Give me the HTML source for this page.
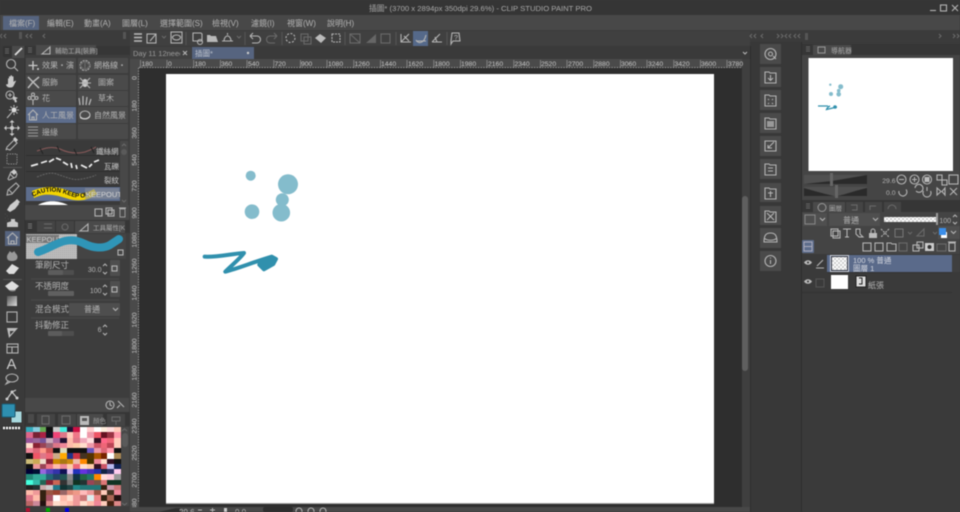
<!DOCTYPE html>
<html><head><meta charset="utf-8"><style>
html,body{margin:0;padding:0;background:#3a3a3a;width:960px;height:512px;overflow:hidden}
svg{position:absolute;left:0;top:0;filter:blur(.45px)}
text{font-family:"Liberation Sans","Noto Sans CJK TC",sans-serif;font-size:8px;fill:#b4b4b4}
.r text{font-size:6.800px;fill:#c8c8c8}
.k{fill:none;stroke:#b4b4b4;stroke-width:1.1}
.d{fill:none;stroke:#6a6a6a;stroke-width:1.1}
#pal{position:absolute;left:26px;top:427px;width:95px;height:79px;display:grid;grid-template-columns:repeat(14,1fr);grid-template-rows:repeat(15,1fr);background:#222;filter:blur(.4px)}
#pal i{display:block}
</style></head><body>
<svg width="960" height="512" viewBox="0 0 960 512" xmlns="http://www.w3.org/2000/svg">
<defs>
<pattern id="ch" width="4" height="4" patternUnits="userSpaceOnUse"><rect width="4" height="4" fill="#fff"/><rect width="2" height="2" fill="#cfcfcf"/><rect x="2" y="2" width="2" height="2" fill="#cfcfcf"/></pattern>
<pattern id="ch2" width="2" height="2" patternUnits="userSpaceOnUse"><rect width="2" height="2" fill="#bdbdbd"/><rect width="1" height="1" fill="#a8a8a8"/></pattern>
<path id="cau" d="M33 197c14-8 25-6 38-1 8 3 14 2 20-2"/>
</defs>
<!-- chrome -->
<rect width="960" height="512" fill="#3a3a3a"/>
<rect width="960" height="15" fill="#353535"/>
<text x="369" y="11" style="fill:#a8a8a8;font-size:7.700px">插圖* (3700 x 2894px 350dpi 29.6%)  - CLIP STUDIO PAINT PRO</text>
<path d="M930 10.500h6" class="k"/><rect x="940.500" y="5" width="6" height="6" class="k"/><path d="M952 5l6 6M958 5l-6 6" class="k"/>
<rect y="15" width="960" height="15" fill="#484848"/>
<rect x="3" y="16" width="36" height="14" fill="#56647f"/>
<g>
<text x="9" y="26">檔案(F)</text><text x="47" y="26">編輯(E)</text><text x="84" y="26">動畫(A)</text><text x="122" y="26">圖層(L)</text><text x="160" y="26">選擇範圍(S)</text><text x="212" y="26">檢視(V)</text><text x="251" y="26">濾鏡(I)</text><text x="287" y="26">視窗(W)</text><text x="327" y="26">說明(H)</text>
</g>
<rect y="30" width="960" height="16" fill="#3b3b3b"/>
<rect x="130" y="31" width="620" height="15" fill="#404040"/>
<path d="M2 34l-2 2 2 2M6 34l-2 2 2 2M28 34l-2 2 2 2M32 34l-2 2 2 2M45 34l-2 2 2 2M752 34l-2 2 2 2M756 34l-2 2 2 2M763 34l-2 2 2 2M777 34l2 2-2 2M781 34l2 2-2 2M787 34l-2 2 2 2M791 34l-2 2 2 2M796 34l-2 2 2 2M800 34l-2 2 2 2M939 34l2 2-2 2M953 34l2 2-2 2M957 34l2 2-2 2" class="d"/>
<rect x="19" y="32" width="3" height="7" fill="#555"/><rect x="123" y="32" width="3" height="7" fill="#555"/><rect x="805" y="33" width="3" height="7" fill="#555"/>
<!-- toolbar icons -->
<path d="M134 34h8M134 37.500h8M134 41h8" stroke="#bbb" stroke-width="1.400" fill="none"/>
<rect x="147" y="34" width="9" height="9" class="k"/><path d="M150 41l6-7" class="k"/>
<path d="M162 36l2 2 2-2" class="d"/>
<rect x="171" y="32" width="11" height="11" class="k"/><ellipse cx="176.500" cy="37.500" rx="4" ry="2.500" class="k"/>
<path d="M193 33h8l1 1v7h-9z" class="k"/><circle cx="200" cy="42" r="2.500" class="k"/>
<path d="M207 42v-7h3l1 1h5l2 6z" fill="#b8b8b8"/>
<path d="M222 41h11M224 41a3.500 5 0 017 0M227.500 35v-2" class="k"/>
<path d="M237 36l2 2 2-2" class="d"/>
<path d="M250 36h7a3.500 3.500 0 010 7h-5M250 36l3-3M250 36l3 3" class="k"/>
<path d="M277 36h-7a3.500 3.500 0 000 7h5M277 36l-3-3M277 36l-3 3" class="d"/>
<circle cx="290.500" cy="38" r="4.500" class="k" stroke-dasharray="2 1.500"/>
<path d="M301 34h7v7h-7zM304 37h7v7h-7z" class="d"/>
<path d="M315 38l5-4 6 4-5 5z" fill="#bbb"/>
<rect x="332" y="34" width="8" height="8" class="k" stroke-dasharray="2 1"/>
<rect x="350" y="34" width="10" height="9" class="d"/><path d="M350 34l10 9" class="d"/>
<path d="M366 43l10-9v9z" fill="#666"/><rect x="381" y="34" width="9" height="9" class="d"/>
<rect x="413" y="31" width="15" height="15" fill="#55698a"/>
<path d="M401 34v8h10M401 42l8-8M404 36l5 5" class="k"/>
<path d="M416 40c2 4 8 4 10-5M416 41h10" class="k"/>
<path d="M432 42h10M432 42l8-8M435 37l2 5" class="k"/>
<path d="M452 33h7l1 8h-7l-2 3v-3z" class="k"/><text x="454" y="40" style="font-size:7px">?</text>
<path d="M186 32v13M245 32v13M282 32v13M345 32v13M396 32v13M447 32v13" stroke="#555"/>
<!-- tabs -->
<rect x="130" y="46" width="620" height="13" fill="#3a3a3a"/>
<rect x="130" y="47" width="61" height="12" fill="#414141"/>
<text x="133" y="56" style="fill:#9c9c9c;font-size:7.500px">Day 11 12need</text>
<rect x="180" y="48" width="10" height="10" fill="#414141"/>
<path d="M183 51l4 4M187 51l-4 4" class="k"/>
<rect x="192" y="47" width="62" height="12" fill="#56647f"/>
<text x="195" y="56" style="fill:#bfc4cf;font-size:7.500px">插圖*</text><circle cx="248" cy="53" r="1.200" fill="#ccc"/>
<path d="M743 52l2 2 2-2" class="k"/>
<!-- canvas -->
<rect x="139" y="68" width="603" height="439" fill="#2e2e2e"/>
<rect x="166" y="74" width="548" height="429" fill="#fff"/>
<path d="M166 503.500h548" stroke="#a5a5a5"/>
<rect x="130" y="59" width="612" height="9" fill="#4a4a4a"/>
<rect x="130" y="59" width="9" height="448" fill="#4a4a4a"/>
<rect x="742" y="59" width="8" height="448" fill="#3f3f3f"/>
<rect x="742" y="196" width="6" height="175" rx="3" fill="#5f5f5f"/>
<path d="M139 67.500H742" stroke="#a8a8a8" stroke-dasharray="1 1.670"/>
<path d="M138.500 68V503" stroke="#a8a8a8" stroke-dasharray="1 1.670"/>
<g class="r">
<path d="M140.500 60v8M167 60v8M193.700 60v8M220.400 60v8M247 60v8M273.800 60v8M300.500 60v8M327 60v8M353.800 60v8M380.500 60v8M407 60v8M433.800 60v8M460.500 60v8M487 60v8M513.800 60v8M540.500 60v8M567 60v8M593.800 60v8M620.500 60v8M647 60v8M673.800 60v8M700.500 60v8M727 60v8" stroke="#999" stroke-width=".7"/>
<text x="141.500" y="66">180</text><text x="168" y="66">0</text><text x="194.500" y="66">180</text><text x="221" y="66">360</text><text x="248" y="66">540</text><text x="274.500" y="66">720</text><text x="301" y="66">900</text><text x="328" y="66">1080</text><text x="354.500" y="66">1260</text><text x="381" y="66">1440</text><text x="408" y="66">1620</text><text x="434.500" y="66">1800</text><text x="461" y="66">1980</text><text x="488" y="66">2160</text><text x="514.500" y="66">2340</text><text x="541" y="66">2520</text><text x="568" y="66">2700</text><text x="594.500" y="66">2880</text><text x="621" y="66">3060</text><text x="648" y="66">3240</text><text x="674.500" y="66">3420</text><text x="701" y="66">3600</text><text x="728" y="66">3780</text>
<g text-anchor="middle">
<text transform="translate(136.500 78) rotate(-90)">0</text><text transform="translate(136.500 106) rotate(-90)">180</text><text transform="translate(136.500 133) rotate(-90)">360</text><text transform="translate(136.500 160) rotate(-90)">540</text><text transform="translate(136.500 186) rotate(-90)">720</text><text transform="translate(136.500 213) rotate(-90)">900</text><text transform="translate(136.500 240) rotate(-90)">1080</text><text transform="translate(136.500 266) rotate(-90)">1260</text><text transform="translate(136.500 293) rotate(-90)">1440</text><text transform="translate(136.500 320) rotate(-90)">1620</text><text transform="translate(136.500 346) rotate(-90)">1800</text><text transform="translate(136.500 373) rotate(-90)">1980</text><text transform="translate(136.500 400) rotate(-90)">2160</text><text transform="translate(136.500 426) rotate(-90)">2340</text><text transform="translate(136.500 453) rotate(-90)">2520</text><text transform="translate(136.500 480) rotate(-90)">2700</text><text transform="translate(136.500 506) rotate(-90)">2880</text>
</g></g>
<!-- drawing -->
<g fill="#84bccc"><circle cx="250.700" cy="175.700" r="5"/><circle cx="288" cy="184.300" r="10"/><circle cx="282.300" cy="199.700" r="6.500"/><circle cx="252" cy="211.700" r="7.300"/><circle cx="281.300" cy="212.700" r="8.800"/></g>
<g transform="translate(190 160) scale(.3333)"><path d="M44 290C85 292 125 281 162 279C150 296 125 316 106 335C145 325 185 308 245 290L258 297L250 312L222 328L208 314" fill="none" stroke="#3090ad" stroke-width="12" stroke-linecap="round" stroke-linejoin="round"/><path d="M205 305L245 285L260 295L252 315L222 330z" fill="#3090ad"/></g>
<!-- left toolbar -->
<rect y="46" width="25" height="466" fill="#3a3a3a"/>
<rect x="12" y="46" width="13" height="12" fill="#4a4a4a"/><rect x="3" y="46" width="9" height="11" fill="#333"/>
<path d="M5 49h4M5 51h4M5 53h4" stroke="#666"/>
<path d="M15 55l7-7" stroke="#ddd" stroke-width="1.800"/>
<path d="M25 46v466" stroke="#2e2e2e"/>
<circle cx="11" cy="64" r="4.500" class="k"/><path d="M14.500 67.500l3.500 3.500" class="k"/>
<path d="M8 84v-5c0-1 1-1 1 0v2-4c0-1 1.500-1 1.500 0v4-5c0-1 1.500-1 1.500 0v5-4c0-1 1.500-1 1.500 0v5c1-1 2-1.500 2.500-1l-2.500 5c-1 1.500-2 1.500-3.500 1.500-2 0-3.500-1-4-3z" fill="#c8c8c8"/>
<circle cx="10" cy="95" r="4" class="k"/><path d="M10 93v4M8 95h4" class="k"/><path d="M13 96l5 2-2 1 1 3-2 .5-1-3-1 1z" fill="#c8c8c8"/>
<path d="M7 118l7-8" class="k"/><circle cx="14" cy="110" r="2.500" fill="#ddd"/><path d="M14 105v2M14 113v2M9 110h2M17 110h2M10.500 106.500l1.500 1.500M16 112l1.500 1.500M17.500 106.500L16 108" class="k" stroke-width=".8"/>
<path d="M12 121v14M5 128h14" class="k"/><path d="M12 120l-2.500 2.500h5zM12 136l-2.500-2.500h5zM4 128l2.500-2.500v5zM20 128l-2.500-2.500v5z" fill="#ccc"/><circle cx="12" cy="128" r="2" fill="#ccc"/>
<path d="M7 149l-1 1 1-3 7-7 3 3-7 7z" class="k"/><path d="M13 139l2-2 3 3-2 2z" fill="#ccc"/>
<rect x="7" y="154" width="10" height="10" fill="none" stroke="#888" stroke-dasharray="1.500 1"/>
<path d="M3 167.500h19" stroke="#555"/>
<path d="M8 179l3-7 3-1 3 3-1 3-7 3z M10 174l4 4" class="k"/><path d="M11 172l3-3 3 3-3 3z" fill="#ccc"/>
<path d="M7 195l1-5 8-7 3 3-7 8zM9 190l3 3" class="k"/>
<path d="M7 210l3-5 5-4 4 3-4 5-5 3z" fill="#ccc"/><path d="M15 201l2-2 3 3-2 2z" fill="#ccc"/>
<path d="M7 227h11v-4c0-1-3-1-3-2v-2h-4v2c0 1-4 1-4 2z" fill="#c8c8c8"/><path d="M5 214h.1M7 216h.1M5 218h.1M8 219h.1M6 221h.1" stroke="#bbb" stroke-width="1.200"/>
<rect x="5" y="231" width="15" height="15" fill="#56647f"/>
<path d="M7 238l5.500-5 5.500 5M8.500 237v7h8v-7M11 244v-3h3v3" class="k"/>
<path d="M7 257c0-3 2.500-4 2.500-6 1 1 2 1 2.500 2 .5-1 1.500-1 2.500-2 0 2 3 3 3 6 0 3-2.500 4-5.500 4s-5-1-5-4z" fill="#999"/>
<path d="M6 271l6-7 7 4-5 6H9z" fill="#ddd"/>
<path d="M3 279.500h19" stroke="#555"/>
<path d="M5 286l7-5 7 5-4 4H9z" fill="#ddd"/><path d="M9 290c1 2 6 2 7 0z" fill="#888"/>
<defs><linearGradient id="g1" x1="0" y1="0" x2="1" y2="1"><stop offset="0" stop-color="#555"/><stop offset="1" stop-color="#ddd"/></linearGradient></defs>
<rect x="7" y="296" width="10" height="10" fill="url(#g1)"/>
<rect x="7" y="312" width="10" height="10" class="k"/>
<path d="M7 328h11l-9 10zM10 331h4l-4 4z" fill="#bbb" fill-rule="evenodd"/>
<rect x="7" y="344" width="11" height="9" class="k"/><path d="M7 347h11M12 347v6" class="k"/>
<text x="6.500" y="369" style="fill:#ccc;font-size:15px">A</text>
<ellipse cx="12" cy="378" rx="6" ry="4" class="k"/><path d="M8 381l-2 3 4-2" class="k"/>
<path d="M7 399l5-7 5 6M12 392l4-2" stroke="#ccc" stroke-width="1.200" fill="none"/><circle cx="7" cy="399" r="1.500" fill="#ccc"/><circle cx="17" cy="398" r="1.500" fill="#ccc"/><circle cx="12" cy="392" r="1.500" fill="#ccc"/>
<rect x="11" y="411" width="11" height="12" fill="#a9d9de" stroke="#333"/>
<rect x="2" y="404" width="13" height="13" rx="1" fill="#2e8fb0" stroke="#1c5c73"/>
<rect x="2" y="425.500" width="20" height="5" fill="#333"/><path d="M3 428h18" stroke="#fff" stroke-width="2.500" stroke-dasharray="2 1"/>
<!-- left panel -->
<rect x="25" y="46" width="105" height="466" fill="#3d3d3d"/>
<rect x="25" y="46" width="105" height="9" fill="#363636"/>
<rect x="36" y="45" width="60" height="10" fill="#4a4a4a"/>
<path d="M28 48h4M28 50h4M28 52h4" stroke="#666"/>
<path d="M42 54l8-7v7z" class="k"/>
<text x="55" y="53" style="fill:#aaa;font-size:6.500px">輔助工具[裝飾]</text>
<g fill="#4a4a4a"><rect x="26" y="58" width="50" height="15"/><rect x="78" y="58" width="50" height="15"/><rect x="26" y="75" width="50" height="15"/><rect x="78" y="75" width="50" height="15"/><rect x="26" y="91" width="50" height="15"/><rect x="78" y="91" width="50" height="15"/><rect x="78" y="107" width="50" height="16"/><rect x="26" y="124" width="50" height="15"/><rect x="78" y="124" width="50" height="15"/></g>
<rect x="26" y="107" width="50" height="16" fill="#5d6d8c"/>
<g>
<text x="42" y="68">效果・演</text><text x="94" y="68">網格線・</text><text x="42" y="85">服飾</text><text x="98" y="85">圖案</text><text x="42" y="101">花</text><text x="98" y="101">草木</text><text x="42" y="118">人工風景</text><text x="94" y="118">自然風景</text><text x="42" y="135">邊緣</text>
</g>
<path d="M33 61v9M28.500 65.500h9" stroke="#ccc" stroke-width="1.300"/><circle cx="38" cy="69" r="1" fill="#ccc"/>
<circle cx="85" cy="65.500" r="5" class="k" stroke-dasharray="2 1"/><path d="M80 65.500l5-5 5 5-5 5zM85 61v9" class="d"/>
<path d="M28 77l5 5 6-5M28 88l5-6 6 6M33 82v-1" stroke="#bbb" stroke-width="1.500" fill="none"/>
<ellipse cx="85" cy="83" rx="3" ry="4" fill="#ccc"/><path d="M80 78l10 10M90 78l-10 10M79 83h12" class="k"/>
<circle cx="33" cy="98" r="2" class="k"/><circle cx="33" cy="94.500" r="1.500" class="k"/><circle cx="36.500" cy="98" r="1.500" class="k"/><circle cx="29.500" cy="98" r="1.500" class="k"/><path d="M33 100v5" class="k"/>
<path d="M80 105l-1-7M83 105v-9M86 105l1-8M89 105l2-6" stroke="#bbb" stroke-width="1.200"/>
<path d="M28 115l5-5 5 5M29.500 114v6h7v-6M32 120v-3h2v3" class="k"/>
<ellipse cx="85" cy="115" rx="5" ry="4" class="k"/><path d="M80 116c2 3 8 3 10-1v2c-2 3-8 3-10 1z" fill="#ccc"/>
<path d="M28 127h10M28 130h10M28 133h10M28 136h10" stroke="#999"/>
<!-- brush list -->
<rect x="26" y="141" width="94" height="64" fill="#3a3a3a"/>
<rect x="26" y="186" width="94" height="15" fill="#5d6d8c"/>
<path d="M26 155.500h94M26 171.500h94M26 186.500h94" stroke="#2e2e2e"/>
<path d="M37 151c8-3 15-5 23-2 8 4 16 5 25 3 6-2 9-4 11-5" fill="none" stroke="#8a5a5a"/>
<path d="M40 148l3 6M57 146l3 6M74 149l3 6M91 147l3 6" stroke="#222"/>
<text x="96" y="154" style="fill:#ccc;font-size:7.500px">鐵絲網</text>
<path d="M31 166l7-2M41 163l6-2M49 162l5-3M56 158l5 2M63 162l5 3M71 163l1 5M76 165l1 4M81 165l6 3M89 167l3-3M94 162l5-2" stroke="#eee" stroke-width="1.700" fill="none"/>
<text x="104" y="169" style="fill:#ccc;font-size:7.500px">瓦礫</text>
<path d="M37 177c8-3 14-6 22-2 8 2 14 6 23 4 5-1 10-2 14-4" fill="none" stroke="#666" stroke-dasharray="2 1"/>
<text x="104" y="183" style="fill:#ccc;font-size:7.500px">裂紋</text>
<path d="M32 191c14-6 26-5 40 1 8 3 15 1 22-3l3 5c-8 6-18 8-28 5-13-4-23-7-35-1z" fill="#f2d400"/>
<text style="fill:#111;font-size:6.300px;font-weight:bold"><textPath href="#cau">CAUTION KEEP OUT</textPath></text>
<rect x="85" y="188" width="34" height="11" fill="#8a8f98" fill-opacity=".6"/>
<text x="86" y="197" style="fill:#d5d5d5;font-size:7.500px">KEEPOUT</text>
<path d="M38 205c8-5 20-5 30 0z" fill="#fff"/>
<rect x="120" y="141" width="8" height="64" fill="#484848"/><circle cx="124" cy="152" r="3" fill="#5a5a5a"/><path d="M122 146l2-2 2 2M122 200l2 2 2-2" class="d"/>
<rect x="25" y="205" width="104" height="15" fill="#484848"/>
<rect x="95" y="209" width="7" height="7" class="k"/><rect x="106" y="208" width="6" height="6" class="k"/><rect x="108" y="210" width="6" height="6" class="k"/><rect x="120" y="209" width="5" height="8" fill="none" stroke="#999"/><path d="M119 208h7" class="k"/>
<!-- tool prop -->
<rect x="25" y="220" width="105" height="13" fill="#363636"/>
<rect x="37" y="221" width="18" height="11" fill="#444"/><rect x="56" y="221" width="18" height="11" fill="#444"/><rect x="75" y="221" width="50" height="12" fill="#4a4a4a"/>
<path d="M28 224h4M28 226h4M28 228h4" stroke="#777"/>
<path d="M44 224h8M44 228h8" class="d"/><circle cx="65" cy="227" r="3" class="d"/>
<path d="M80 231l8-7v7z" class="k"/>
<text x="93" y="230" style="fill:#aaa;font-size:6.500px">工具屬性[K</text>
<rect x="26" y="234" width="100" height="25" fill="#444"/>
<rect x="26" y="234" width="51" height="25" fill="url(#ch2)"/>
<rect x="26" y="235" width="33" height="8" fill="#777"/>
<text x="26.500" y="242" style="fill:#ccc;font-size:7.500px">KEEPOUT</text>
<path d="M38 252c10-3 18-9 27-11 8-2 14 0 20 3 8 4 18 5 25 1 3-2 6-4 9-6" fill="none" stroke="#2f95b7" stroke-width="8" stroke-linecap="round"/>
<rect x="118" y="250" width="5" height="5" class="k"/>
<text x="35" y="268" style="font-size:8.500px">筆刷尺寸</text>
<rect x="48" y="270" width="26" height="5" rx="1" fill="#4e4e4e"/><rect x="48" y="270" width="15" height="5" rx="1" fill="#5c5c5c"/>
<text x="101.500" y="272" text-anchor="end" style="font-size:7px">30.0</text><path d="M103 266l2-2 2 2M103 272l2 2 2-2" class="k" stroke-width=".8"/>
<rect x="110" y="260" width="10" height="16" rx="1" fill="#4e4e4e"/><rect x="112" y="266" width="5" height="5" class="k" stroke-width=".8"/>
<path d="M31 279h88" stroke="#4a4a4a"/>
<text x="35" y="289" style="font-size:8.500px">不透明度</text>
<rect x="48" y="291" width="26" height="5" rx="1" fill="#606060"/>
<text x="101.500" y="293" text-anchor="end" style="font-size:7px">100</text><path d="M103 287l2-2 2 2M103 293l2 2 2-2" class="k" stroke-width=".8"/>
<rect x="110" y="281" width="10" height="16" rx="1" fill="#4e4e4e"/><rect x="112" y="287" width="5" height="5" class="k" stroke-width=".8"/>
<path d="M31 300h88" stroke="#4a4a4a"/>
<text x="35" y="312" style="font-size:8.500px">混合模式</text>
<rect x="69" y="303" width="51" height="13" rx="1" fill="#4e4e4e"/>
<text x="84" y="312">普通</text><path d="M113 308l2.500 2.500 2.500-2.500" class="k"/>
<path d="M31 318h88" stroke="#4a4a4a"/>
<text x="35" y="328" style="font-size:8.500px">抖動修正</text>
<rect x="48" y="331" width="26" height="5" rx="1" fill="#4e4e4e"/><rect x="48" y="331" width="14" height="5" rx="1" fill="#5c5c5c"/>
<text x="101.500" y="332" text-anchor="end" style="font-size:7px">6</text><path d="M103 327l2-2 2 2M103 333l2 2 2-2" class="k" stroke-width=".8"/>
<rect x="25" y="398" width="104" height="14" fill="#484848"/>
<circle cx="110" cy="405" r="4" class="k"/><path d="M110 402v3l2 1" class="k"/>
<path d="M118 401l6 6M117 408l3-3" class="k" stroke-width="1.500"/>
<rect x="25" y="412" width="105" height="14" fill="#363636"/>
<rect x="28" y="414" width="6" height="9" fill="#4a4a4a"/>
<rect x="37" y="414" width="18" height="12" fill="#444"/><rect x="58" y="414" width="18" height="12" fill="#444"/><rect x="77" y="414" width="26" height="12" fill="#4a4a4a"/><rect x="107" y="414" width="18" height="12" fill="#444"/>
<rect x="42" y="416" width="7" height="8" class="d"/><rect x="62" y="416" width="8" height="8" class="d"/><rect x="80" y="416" width="9" height="9" fill="#bbb"/><rect x="82" y="418" width="5" height="3" fill="#555"/>
<text x="93" y="423" style="fill:#999;font-size:6.500px">顏色</text>
<path d="M112 417h8v4h-8zM116 421v4" class="d"/>
<rect x="121" y="427" width="8" height="80" fill="#484848"/><rect x="122" y="433" width="6" height="14" rx="3" fill="#5a5a5a"/>
<path d="M122 431l2.500-2 2.500 2M122 503l2.500 2 2.500-2" class="d"/>
<rect x="25" y="506" width="105" height="6" fill="#3d3d3d"/>
<rect x="26" y="508" width="4" height="4" fill="#b01030"/><rect x="46" y="508" width="4" height="4" fill="#0a0"/><rect x="65" y="508" width="4" height="4" fill="#00d"/>
<!-- bottom bar -->
<rect x="130" y="507" width="620" height="5" fill="#484848"/>
<path d="M159 512l17-4h4v4z" fill="#2e2e2e"/>
<text x="179" y="515">29.6</text><path d="M198 510h4M210 510h5M212.500 508v4" class="k"/><rect x="224" y="508" width="3" height="4" fill="#ccc"/>
<text x="235" y="515">0.0</text>
<rect x="263" y="507" width="30" height="5" rx="2" fill="#2e2e2e"/>
<circle cx="299" cy="511" r="3" class="k"/><circle cx="311" cy="511" r="3" class="k"/><circle cx="323" cy="511" r="3" class="k"/>
<!-- dock -->
<rect x="750" y="42" width="51" height="470" fill="#383838"/>
<path d="M750.500 46v466M801.500 42v470" stroke="#2e2e2e"/>
<g fill="#4a4a4a"><rect x="760" y="44" width="21" height="20"/><rect x="760" y="67" width="21" height="20"/><rect x="760" y="90" width="21" height="20"/><rect x="760" y="113" width="21" height="20"/><rect x="760" y="136" width="21" height="20"/><rect x="760" y="159" width="21" height="20"/><rect x="760" y="183" width="21" height="19"/><rect x="760" y="206" width="21" height="19"/><rect x="760" y="228" width="21" height="20"/><rect x="760" y="251" width="21" height="20"/></g>
<circle cx="770.500" cy="54" r="5.500" class="k"/><circle cx="770.500" cy="54" r="2" class="k"/><path d="M773 56l3 3" class="k"/>
<g class="k"><path d="M765 72h4l1 1h6v10h-11z"/><path d="M765 95h4l1 1h6v10h-11z"/><path d="M765 118h4l1 1h6v10h-11z"/><path d="M765 141h11v10h-11z"/><path d="M765 164h4l1 1h6v10h-11z"/><path d="M765 188h4l1 1h6v10h-11z"/><path d="M765 211h4l1 1h6v10h-11z"/></g>
<path d="M770.500 75v5M768 78l2.500 2.500 2.500-2.500M768 99l1 1M773 99l-1 1M768 104l1-1M773 104l-1-1" class="k"/>
<rect x="767" y="121" width="7" height="6" fill="#999"/>
<path d="M768 148l6-6M772 148h-4v-3" class="k"/>
<path d="M768 168h5M768 171h5M770.500 191v6M768 193h5M767 213l7 7M774 213l-7 7" class="k"/>
<path d="M764 242c0-8 3-9 6.500-9s6.500 1 6.500 9zM764 238c3 3 10 3 13 0" class="k"/>
<circle cx="770.500" cy="261" r="5.500" class="k"/><path d="M770.500 260v4M770.500 257.500v1" class="k"/>
<!-- right -->
<rect x="802" y="42" width="158" height="470" fill="#3a3a3a"/>
<rect x="802" y="44" width="158" height="11" fill="#363636"/>
<rect x="813" y="45" width="38" height="10" fill="#4a4a4a"/>
<path d="M806 47h4M806 49h4M806 51h4" stroke="#666"/>
<rect x="818" y="47" width="7" height="6" fill="none" stroke="#999"/>
<text x="831" y="53" style="fill:#aaa;font-size:7px">導航器</text>
<rect x="802" y="55" width="158" height="117" fill="#444"/>
<rect x="808.500" y="58" width="144.500" height="113" fill="#fff"/>
<g fill="#84bccc"><circle cx="830.300" cy="84.700" r="1.200"/><circle cx="840.700" cy="86.700" r="2.500"/><circle cx="838.700" cy="90.700" r="1.800"/><circle cx="831" cy="94" r="2"/><circle cx="838.700" cy="94.300" r="2.300"/></g>
<path d="M818 106h10M830 106c-2 1-3 2-3.500 3.500L837 107" fill="none" stroke="#3090ad" stroke-width="1.300"/><circle cx="835" cy="107" r="1.800" fill="#3090ad"/>
<rect x="802" y="171" width="158" height="29" fill="#454545"/>
<rect x="804" y="175" width="63" height="9" fill="#505050"/><path d="M804 184l28-3 35-6v9z" fill="#2a2a2a"/><rect x="830" y="173" width="3" height="13" fill="#666"/>
<rect x="804" y="187" width="63" height="9" fill="#505050"/><path d="M804 196v-8c10 3 25 7 30 8zM837 196c7-1 20-6 30-8v8z" fill="#2a2a2a"/><rect x="835" y="185" width="3" height="13" fill="#666"/>
<text x="895.500" y="183" text-anchor="end" style="font-size:6.800px">29.6</text><text x="895.500" y="195" text-anchor="end" style="font-size:6.800px">0.0</text>
<g class="k"><circle cx="901.500" cy="179.500" r="4.500"/><path d="M899 179.500h5"/><circle cx="914.500" cy="179.500" r="4.500"/><path d="M912 179.500h5M914.500 177v5"/><circle cx="927" cy="179.500" r="4.500"/><rect x="937" y="175" width="5" height="5"/><rect x="942" y="180" width="5" height="5"/><rect x="949" y="175" width="9" height="9"/><path d="M899 191a4 4 0 107-1.500M916 191a4 4 0 10-1-3M927 187v4M923.500 191a4 4 0 107 0M937 188v7l4-3.500zM945 188v7l-3-3.500zM950 188l7 7M957 188l-7 7"/></g>
<rect x="924.500" y="177" width="5" height="5" fill="#bbb"/>
<rect x="802" y="200" width="158" height="12" fill="#363636"/>
<path d="M806 204h4M806 206h4M806 208h4" stroke="#666"/>
<rect x="813" y="202" width="32" height="11" fill="#4a4a4a"/><rect x="846" y="202" width="17" height="10" fill="#444"/><rect x="865" y="202" width="17" height="10" fill="#444"/><rect x="884" y="202" width="17" height="10" fill="#444"/>
<circle cx="822" cy="207.500" r="4" fill="none" stroke="#999"/><text x="829" y="210.500" style="fill:#aaa;font-size:6.500px">圖層</text>
<path d="M851 205h6v5h-5M870 210v-4h6M888 209a4 4 0 018 0" class="d"/>
<rect x="802" y="212" width="158" height="42" fill="#444"/>
<rect x="803" y="213" width="24" height="13" fill="#4f4f4f"/><rect x="805" y="215" width="10" height="9" fill="none" stroke="#888"/><path d="M820 218l2.500 2.500 2.500-2.500" class="k"/>
<rect x="829" y="213" width="51" height="13" fill="#4f4f4f"/><text x="843" y="223">普通</text><path d="M873 218l2.500 2.500 2.500-2.500" class="k"/>
<rect x="884" y="217" width="53" height="5" fill="url(#ch)"/><rect x="936" y="213" width="2" height="12" fill="#999"/>
<text x="951" y="223" text-anchor="end" style="font-size:7px">100</text><path d="M953 217l2-2 2 2M953 222l2 2 2-2" class="k" stroke-width=".8"/>
<g class="k"><rect x="831" y="229" width="7" height="7"/><rect x="833" y="231" width="7" height="7"/></g>
<path d="M843 229h8M847 229v8M845 237h4M856 229h4v5l3 3h-4l-3-3z" stroke="#bbb" fill="none"/><rect x="869" y="233" width="8" height="5" fill="#bbb"/><path d="M871 233v-2a2 2 0 014 0v2" stroke="#bbb" fill="none"/>
<path d="M881 229l8 8M889 229l-8 8" class="k" stroke-dasharray="2 1"/>
<rect x="895" y="229" width="8" height="8" fill="none" stroke="#777"/><path d="M908 232l2 2 2-2M917 236l7-7v7zM933 232l2 2 2-2" class="d"/>
<rect x="938" y="226" width="22" height="13" fill="#4f4f4f"/><rect x="941" y="232" width="6" height="6" fill="#fff"/><rect x="939" y="228" width="7" height="7" fill="#3a8de8"/><path d="M951 231l2.500 2.500 2.500-2.500" class="k"/>
<rect x="802" y="240" width="12" height="13" rx="1" fill="#5d6d8c"/><rect x="804" y="242" width="8" height="9" stroke="#aab" fill="none"/><path d="M804 246.500h8" stroke="#aab"/>
<g class="k"><rect x="863" y="243" width="8" height="8"/><rect x="875" y="243" width="8" height="8"/><path d="M887 243h4l1 1h4v7h-9z"/><rect x="913" y="245" width="6" height="6"/><rect x="917" y="242" width="6" height="6"/><rect x="949" y="243" width="6" height="8"/><path d="M948 242h8"/></g>
<rect x="925" y="243" width="9" height="8" fill="#ccc"/>
<rect x="899" y="243" width="8" height="8" class="d"/><rect x="937" y="244" width="9" height="7" class="d"/>
<circle cx="929.500" cy="247" r="2" fill="#333"/>
<rect x="802" y="254" width="158" height="258" fill="#3a3a3a"/>
<rect x="827" y="255" width="125" height="17" fill="#5a6a8a"/>
<rect x="952" y="255" width="8" height="17" fill="#3f3f3f"/>
<rect x="830.500" y="255.500" width="18" height="16" fill="#2f3442" stroke="#cfd4de"/><rect x="832" y="257" width="15" height="13" fill="url(#ch)"/>
<text x="853" y="263" style="fill:#d5d8e0;font-size:7.500px">100 % 普通</text><text x="853" y="271" style="fill:#d5d8e0;font-size:7.500px">圖層 1</text>
<path d="M804 262.500c2-3 6-3 8 0c-2 3-6 3-8 0z" fill="#bbb"/><circle cx="808" cy="262.500" r="1" fill="#333"/>
<path d="M816 268h8M817 266l6-6" class="k"/>
<path d="M827 272.500h125M802 292.500h150" stroke="#333"/>
<path d="M804 281.500c2-3 6-3 8 0c-2 3-6 3-8 0z" fill="#bbb"/><circle cx="808" cy="281.500" r="1" fill="#333"/>
<rect x="816" y="279" width="8" height="8" fill="none" stroke="#555"/>
<rect x="831" y="275" width="17" height="14" fill="#fff"/>
<rect x="856" y="276" width="10" height="11" fill="#ddd" stroke="#222"/><path d="M859 278h3v6h-3" stroke="#222" fill="none"/>
<text x="868" y="288">紙張</text>
</svg>
<div id="pal"><i style="background:#3ab"></i><i style="background:#8cd"></i><i style="background:#6a5"></i><i style="background:#111"></i><i style="background:#ccc"></i><i style="background:#4ed"></i><i style="background:#213"></i><i style="background:#c14"></i><i style="background:#fff"></i><i style="background:#fcc"></i><i style="background:#fff"></i><i style="background:#fed"></i><i style="background:#fdd"></i><i style="background:#fcb"></i>
<i style="background:#d68"></i><i style="background:#723"></i><i style="background:#a24"></i><i style="background:#112"></i><i style="background:#e47"></i><i style="background:#d78"></i><i style="background:#fcb"></i><i style="background:#e78"></i><i style="background:#fff"></i><i style="background:#e9a"></i><i style="background:#e56"></i><i style="background:#612"></i><i style="background:#934"></i><i style="background:#f9a"></i>
<i style="background:#959"></i><i style="background:#969"></i><i style="background:#759"></i><i style="background:#cab"></i><i style="background:#a69"></i><i style="background:#213"></i><i style="background:#fba"></i><i style="background:#d78"></i><i style="background:#eab"></i><i style="background:#fdd"></i><i style="background:#312"></i><i style="background:#f68"></i><i style="background:#e67"></i><i style="background:#fcb"></i>
<i style="background:#fdc"></i><i style="background:#823"></i><i style="background:#945"></i><i style="background:#967"></i><i style="background:#d78"></i><i style="background:#e89"></i><i style="background:#fba"></i><i style="background:#fca"></i><i style="background:#fdc"></i><i style="background:#e9a"></i><i style="background:#c56"></i><i style="background:#e67"></i><i style="background:#b45"></i><i style="background:#fcb"></i>
<i style="background:#e89"></i><i style="background:#d67"></i><i style="background:#f98"></i><i style="background:#c55"></i><i style="background:#111"></i><i style="background:#ddb"></i><i style="background:#111"></i><i style="background:#111"></i><i style="background:#111"></i><i style="background:#65b"></i><i style="background:#e9a"></i><i style="background:#d67"></i><i style="background:#f9a"></i><i style="background:#111"></i>
<i style="background:#111"></i><i style="background:#e56"></i><i style="background:#d78"></i><i style="background:#e67"></i><i style="background:#ca8"></i><i style="background:#fa0"></i><i style="background:#238"></i><i style="background:#c34"></i><i style="background:#432"></i><i style="background:#530"></i><i style="background:#a50"></i><i style="background:#720"></i><i style="background:#fff"></i><i style="background:#a85"></i>
<i style="background:#cb7"></i><i style="background:#ca5"></i><i style="background:#edc"></i><i style="background:#823"></i><i style="background:#c80"></i><i style="background:#a71"></i><i style="background:#c81"></i><i style="background:#eba"></i><i style="background:#f80"></i><i style="background:#430"></i><i style="background:#e89"></i><i style="background:#fdc"></i><i style="background:#312"></i><i style="background:#111"></i>
<i style="background:#111"></i><i style="background:#e99"></i><i style="background:#945"></i><i style="background:#e78"></i><i style="background:#fba"></i><i style="background:#e89"></i><i style="background:#fca"></i><i style="background:#e67"></i><i style="background:#fdc"></i><i style="background:#fca"></i><i style="background:#312"></i><i style="background:#c56"></i><i style="background:#bbe"></i><i style="background:#125"></i>
<i style="background:#003"></i><i style="background:#013"></i><i style="background:#96d"></i><i style="background:#54b"></i><i style="background:#33a"></i><i style="background:#115"></i><i style="background:#dbe"></i><i style="background:#23b"></i><i style="background:#63d"></i><i style="background:#43b"></i><i style="background:#23a"></i><i style="background:#124"></i><i style="background:#336"></i><i style="background:#fce"></i>
<i style="background:#287"></i><i style="background:#3a9"></i><i style="background:#3a9"></i><i style="background:#267"></i><i style="background:#246"></i><i style="background:#255"></i><i style="background:#888"></i><i style="background:#134"></i><i style="background:#264"></i><i style="background:#276"></i><i style="background:#f80"></i><i style="background:#fdd"></i><i style="background:#fcd"></i><i style="background:#999"></i>
<i style="background:#4fd"></i><i style="background:#3ba"></i><i style="background:#265"></i><i style="background:#823"></i><i style="background:#c65"></i><i style="background:#333"></i><i style="background:#777"></i><i style="background:#132"></i><i style="background:#233"></i><i style="background:#945"></i><i style="background:#754"></i><i style="background:#d77"></i><i style="background:#132"></i><i style="background:#132"></i>
<i style="background:#222"></i><i style="background:#233"></i><i style="background:#caa"></i><i style="background:#ccc"></i><i style="background:#278"></i><i style="background:#133"></i><i style="background:#244"></i><i style="background:#288"></i><i style="background:#277"></i><i style="background:#277"></i><i style="background:#277"></i><i style="background:#321"></i><i style="background:#c9a"></i><i style="background:#c77"></i>
<i style="background:#fba"></i><i style="background:#e99"></i><i style="background:#321"></i><i style="background:#954"></i><i style="background:#943"></i><i style="background:#966"></i><i style="background:#d87"></i><i style="background:#e98"></i><i style="background:#fbb"></i><i style="background:#e99"></i><i style="background:#954"></i><i style="background:#fcb"></i><i style="background:#432"></i><i style="background:#e89"></i>
<i style="background:#d78"></i><i style="background:#fba"></i><i style="background:#321"></i><i style="background:#a56"></i><i style="background:#fff"></i><i style="background:#fba"></i><i style="background:#fdc"></i><i style="background:#e99"></i><i style="background:#c77"></i><i style="background:#dee"></i><i style="background:#e88"></i><i style="background:#321"></i><i style="background:#a65"></i><i style="background:#211"></i>
<i style="background:#b66"></i><i style="background:#c89"></i><i style="background:#211"></i><i style="background:#d88"></i><i style="background:#fdc"></i><i style="background:#fcb"></i><i style="background:#fba"></i><i style="background:#e99"></i><i style="background:#fdc"></i><i style="background:#fba"></i><i style="background:#e89"></i><i style="background:#fcb"></i><i style="background:#421"></i><i style="background:#d88"></i></div>
</body></html>
